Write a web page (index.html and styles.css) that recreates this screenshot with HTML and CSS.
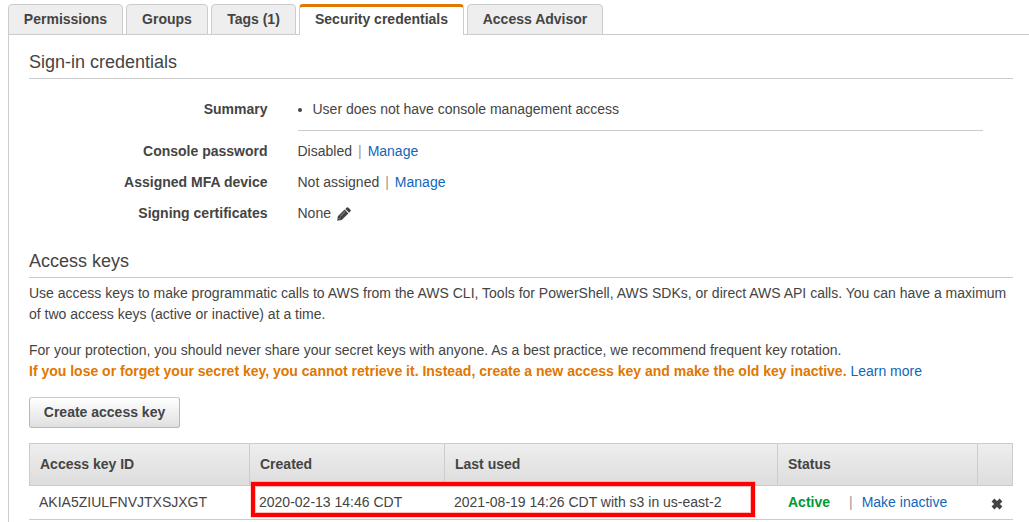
FILE: index.html
```html
<!DOCTYPE html>
<html lang="en">
<head>
<meta charset="utf-8">
<title>Security credentials</title>
<link rel="stylesheet" href="styles.css">
</head>
<body>
<nav class="tabs">
  <a class="tab tab-permissions">Permissions</a>
  <a class="tab tab-groups">Groups</a>
  <a class="tab tab-tags">Tags (1)</a>
  <a class="tab tab-security active">Security credentials</a>
  <a class="tab tab-advisor">Access Advisor</a>
</nav>
<main class="panel">
  <h2 class="heading">Sign-in credentials</h2>
  <dl class="details">
    <dt>Summary</dt>
    <dd class="summary"><ul><li>User does not have console management access</li></ul></dd>
    <dt>Console password</dt>
    <dd>Disabled<span class="divider">|</span><a class="link">Manage</a></dd>
    <dt>Assigned MFA device</dt>
    <dd>Not assigned<span class="divider">|</span><a class="link">Manage</a></dd>
    <dt>Signing certificates</dt>
    <dd class="certificates">None
      <svg class="pencil" width="14" height="14" viewBox="0 0 14 14"><path d="M0.2 13.8 0.8 9.3 7.6 2.6 11.4 6.4 4.7 13.1ZM8.3 1.9 9.8.5Q10.6-.1 11.3.5L13.5 2.7Q14.1 3.4 13.5 4.2L12.1 5.7Z" fill="#444"/><path d="M3.2 9.4 8 4.6M1.5 11l1.5 1.5" stroke="#bbb" stroke-width=".7"/></svg>
    </dd>
  </dl>
  <h2 class="heading heading-keys">Access keys</h2>
  <p class="text">Use access keys to make programmatic calls to AWS from the AWS CLI, Tools for PowerShell, AWS SDKs, or direct AWS API calls. You can have a maximum of two access keys (active or inactive) at a time.</p>
  <p class="text text-protect">For your protection, you should never share your secret keys with anyone. As a best practice, we recommend frequent key rotation.<br><strong class="warning">If you lose or forget your secret key, you cannot retrieve it. Instead, create a new access key and make the old key inactive.</strong> <a class="link">Learn more</a></p>
  <button class="create">Create access key</button>
  <div class="keys">
    <div class="row head">
      <div>Access key ID</div><div>Created</div><div>Last used</div><div>Status</div><div></div>
    </div>
    <div class="row record">
      <div>AKIA5ZIULFNVJTXSJXGT</div>
      <div>2020-02-13 14:46 CDT</div>
      <div>2021-08-19 14:26 CDT with s3 in us-east-2</div>
      <div class="status"><strong class="on">Active</strong><span class="bar">|</span><a class="link">Make inactive</a></div>
      <div class="remove"><svg width="12" height="12" viewBox="0 0 12 12"><path d="M2 2 10 10M10 2 2 10" stroke="#444" stroke-width="4"/></svg></div>
    </div>
    <div class="highlight"></div>
  </div>
</main>
</body>
</html>
```
FILE: styles.css
```css
* { box-sizing: border-box; }
body {
  margin: 0;
  height: 522px;
  overflow: hidden;
  background: #fff;
  color: #444;
  font: 14px/21px "Liberation Sans", Arial, sans-serif;
}
.tabs {
  display: flex;
  gap: 3px;
  height: 35px;
  margin-left: 8px;
  padding-top: 4px;
  background: linear-gradient(#ccc, #ccc) bottom / 100% 1px no-repeat;
}
.tab {
  height: 31px;
  border: 1px solid #ccc;
  border-radius: 4px 4px 0 0;
  background: #eee;
  font-weight: bold;
  line-height: 28px;
  text-align: center;
  white-space: nowrap;
}
.tab-permissions { width: 115px; }
.tab-groups { width: 82px; }
.tab-tags { width: 85px; }
.tab-security { width: 165px; }
.tab-advisor { width: 136px; }
.tab.active {
  border-top: 3px solid #e07700;
  border-bottom: 0;
  background: #fff;
  line-height: 24px;
}
.panel {
  height: 487px;
  margin-left: 8px;
  padding: 14px 16px 0 20px;
  border-left: 1px solid #ccc;
}
.heading {
  height: 30px;
  margin: 0;
  border-bottom: 1px solid #ccc;
  font-size: 18px;
  font-weight: normal;
  line-height: 26px;
}
.details {
  display: grid;
  grid-template-columns: 238.5px 685px;
  column-gap: 30px;
  row-gap: 10px;
  margin: 20px 0 0;
}
.details dt { font-weight: bold; text-align: right; }
.details dd { margin: 0; }
.details .summary { height: 32px; border-bottom: 1px solid #ccc; }
.details ul { margin: 0; padding-left: 15px; }
.divider { margin: 0 6px; color: #999; }
.link { color: #1166bb; }
.certificates { display: flex; gap: 6px; }
.pencil { margin-top: 4px; }
.heading-keys { margin-top: 24px; }
.text { margin: 5px 0 0; }
.text-protect { margin-top: 15px; }
.warning { color: #e07700; }
.create {
  display: block;
  width: 151px;
  height: 31px;
  margin-top: 15px;
  padding: 0 0 1px;
  border: 1px solid #b8b8b8;
  border-top-color: #ccc;
  border-radius: 3px;
  background: linear-gradient(#fff, #e0e0e0);
  color: #444;
  font: bold 14px/28px "Liberation Sans", Arial, sans-serif;
}
.keys { position: relative; margin-top: 15px; }
.row {
  display: grid;
  grid-template-columns: 220px 195px 333px 200px 36px;
  border-bottom: 1px solid #ccc;
}
.head {
  height: 43px;
  border-top: 1px solid #ccc;
  background: linear-gradient(#eee, #ddd);
  font-weight: bold;
  line-height: 41px;
}
.head div { padding-left: 10px; border-left: 1px solid #ccc; }
.head div:last-child { border-right: 1px solid #ccc; }
.record { height: 34px; line-height: 33px; }
.record div { padding-left: 10px; }
.record .status { padding-left: 11px; }
.on { color: #093; }
.bar { margin: 0 9px 0 19px; color: #999; }
.record .remove { padding: 12px 0 0 14px; line-height: 0; }
.highlight {
  position: absolute;
  top: 39px;
  left: 222px;
  width: 504px;
  height: 35px;
  border: 4px solid #f00;
  box-shadow: 0 0 0 1px rgba(255, 0, 0, .15), inset 0 0 0 1px rgba(255, 0, 0, .25);
}
```
